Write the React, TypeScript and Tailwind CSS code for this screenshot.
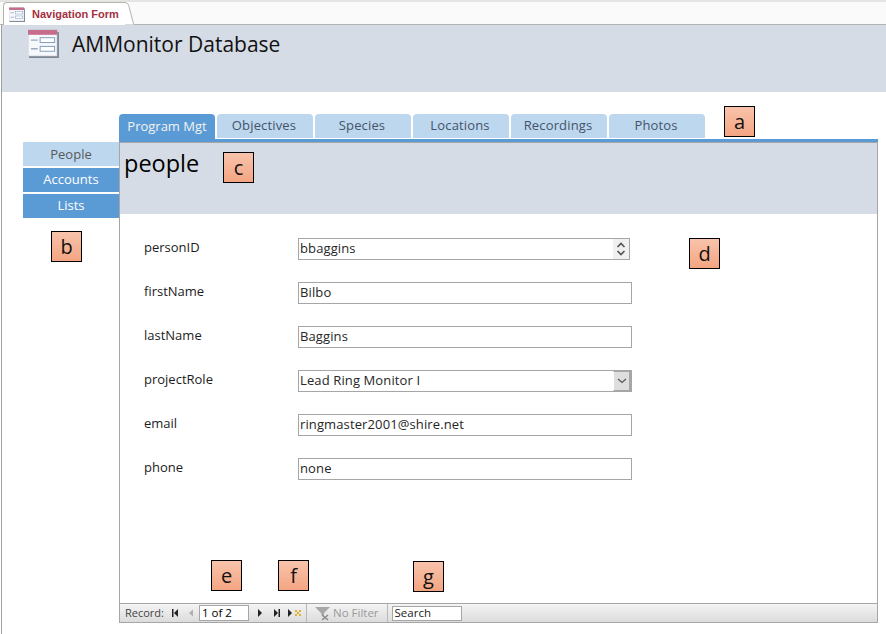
const FONT = "font-['Open_Sans','Noto_Sans',sans-serif]"

const TABS = ["Program Mgt", "Objectives", "Species", "Locations", "Recordings", "Photos"]
const SIDE = ["People", "Accounts", "Lists"]

const NOTES = [
  { text: "a", cls: "left-[724px] top-[106px]" },
  { text: "b", cls: "left-[51px] top-[231px]" },
  { text: "c", cls: "left-[223px] top-[152px]" },
  { text: "d", cls: "left-[689px] top-[238px]" },
  { text: "e", cls: "left-[211px] top-[560px]" },
  { text: "f", cls: "left-[278px] top-[560px]" },
  { text: "g", cls: "left-[413px] top-[561px]" },
]

function FormIcon({ width, height }: { width: number; height: number }) {
  return (
    <svg width={width} height={height} viewBox="0 0 32 30" className="shrink-0">
      <rect x="1" y="3" width="31" height="27" fill="#7d8794" />
      <rect x="0" y="1" width="30" height="27" fill="#f6f8fb" stroke="#a9b4c2" strokeWidth="0.6" />
      <rect x="0" y="1" width="30" height="5" fill="#c66d8c" />
      <path d="M3 11.500h7M3 20.500h7" stroke="#9aa9bb" strokeWidth="1.500" />
      <rect x="12.500" y="9" width="15" height="5" fill="#fff" stroke="#7f9cc0" />
      <rect x="12.500" y="18" width="15" height="5" fill="#fff" stroke="#7f9cc0" />
    </svg>
  )
}

function NavGlyph({ d, color = "#222" }: { d: string; color?: string }) {
  return (
    <svg width="8" height="10" viewBox="0 0 8 10" className="shrink-0">
      <path d={d} fill={color} />
    </svg>
  )
}

function Field({ label, children }: { label: string; children: React.ReactNode }) {
  return (
    <div className="flex h-[22px] items-center">
      <div className="w-[154px] -translate-y-[1px] text-[13px] text-[#1c1c1c]">{label}</div>
      {children}
    </div>
  )
}

function TextBox({ value }: { value: string }) {
  return (
    <div className="flex h-[22px] w-[334px] items-center border border-[#a6a6a6] bg-white pl-[1px] text-[13px] tracking-[0.12px] text-[#262626]">
      {value}
    </div>
  )
}

export default function App() {
  return (
    <div className={`relative flex h-[634px] w-[886px] flex-col overflow-hidden bg-white ${FONT}`}>
      {/* document tab strip */}
      <div className="flex h-[25px] items-end border-t-2 border-b border-t-[#e4e4e4] border-b-[#b4b4b4] bg-[#fafafa] pl-[3px]">
        <div className="relative z-10 -mb-px flex h-[23px] w-[122px] items-center gap-[7px] rounded-tl-[4px] border-t border-l border-[#b4b4a8] bg-white pl-[5px]">
          <FormIcon width={16} height={15} />
          <span className="font-['Liberation_Sans',sans-serif] text-[11px] font-bold whitespace-nowrap text-[#a4303f]">Navigation Form</span>
          <svg width="10" height="23" viewBox="0 0 10 23" className="absolute top-[-1px] left-[120px]">
            <path d="M0 .5c3 0 4 1 5 4L9 20c.3 1.500 1 2.500 1 2.500H0z" fill="#fff" />
            <path d="M0 .5c3 0 4 1 5 4L9 20c.3 1.500 1 2.500 1 2.500" fill="none" stroke="#b4b4a8" />
          </svg>
        </div>
      </div>

      <div className="ml-[1px] flex flex-1 flex-col border-l border-l-[#a0a0a0]">
        <div className="flex h-[67px] items-start gap-[13px] bg-[#d6dce5] pt-[4px] pl-[26px]">
          <FormIcon width={31} height={29} />
          <div className="text-[21px] leading-[30px] text-[#111]">AMMonitor Database</div>
        </div>

        <div className="flex flex-1 pt-[22px] pl-[21px]">
          <div className="flex w-[96px] flex-col gap-[2px] pt-[28px]">
            {SIDE.map((s, i) => (
              <div
                key={s}
                className={
                  i === 0
                    ? "flex h-[24px] items-center justify-center bg-[#bdd7ee] pt-[1px] text-[13px] text-[#595959]"
                    : "flex h-[24px] items-center justify-center bg-[#5b9bd5] text-[13px] text-white"
                }
              >
                {s}
              </div>
            ))}
          </div>

          <div className="flex h-[509px] w-[759px] flex-col">
            <div className="flex h-[28px] gap-[2px] border-b-[3px] border-b-[#5b9bd5]">
              {TABS.map((t, i) => (
                <div
                  key={t}
                  className={
                    i === 0
                      ? "flex h-[25px] w-[96px] items-center justify-center rounded-t-[4px] bg-[#5b9bd5] text-[13px] text-[#f2f2f2]"
                      : "flex h-[24px] w-[96px] items-center justify-center rounded-t-[4px] bg-[#bdd7ee] pr-[2px] text-[13px] tracking-[0.15px] text-[#44546a]"
                  }
                >
                  {t}
                </div>
              ))}
            </div>

            <div className="flex flex-1 flex-col border border-[#a6a6a6]">
              <div className="h-[71px] bg-[#d6dce5] pt-[2px] pl-[4px] text-[23.5px] leading-[36px] text-black">people</div>

              <div className="flex flex-1 flex-col gap-[22px] pt-[24px] pl-[24px]">
                <Field label="personID">
                  <div className="flex h-[22px] w-[332px] items-center justify-between border border-[#a6a6a6] pl-[1px] text-[13px] tracking-[0.12px] text-[#262626]">
                    bbaggins
                    <div className="flex h-full w-[16px] items-center justify-center bg-[#f0f0f0]">
                      <svg width="10" height="16" viewBox="0 0 10 16">
                        <path d="M1.500 6 5 2.500 8.500 6M1.500 10 5 13.500 8.500 10" fill="none" stroke="#555" strokeWidth="1.700" />
                      </svg>
                    </div>
                  </div>
                </Field>
                <Field label="firstName"><TextBox value="Bilbo" /></Field>
                <Field label="lastName"><TextBox value="Baggins" /></Field>
                <Field label="projectRole">
                  <div className="flex h-[22px] w-[334px] items-center justify-between border border-[#a6a6a6] pl-[1px] text-[13px] tracking-[0.12px] text-[#262626]">
                    Lead Ring Monitor I
                    <div className="flex h-full w-[18px] items-center justify-center border-y border-r-2 border-l border-y-[#a6a6a6] border-r-[#a6a6a6] border-l-white bg-[#dedede]">
                      <svg width="10" height="6" viewBox="0 0 10 6">
                        <path d="M1 1l4 3.500L9 1" fill="none" stroke="#555" strokeWidth="1.200" />
                      </svg>
                    </div>
                  </div>
                </Field>
                <Field label="email"><TextBox value="ringmaster2001@shire.net" /></Field>
                <Field label="phone"><TextBox value="none" /></Field>
              </div>

              {/* record navigation */}
              <div className="flex h-[19px] items-center border-t border-[#a6a6a6] bg-gradient-to-b from-[#f4f4f4] to-[#dcdcdc] pl-[5px] text-[11.5px] text-[#444]">
                <span className="w-[46px] text-[11px]">Record:</span>
                <NavGlyph d="M1 1h1.500v8H1zM7 1v8L3 5z" />
                <div className="ml-[8px]"><NavGlyph d="M6 1.500v7L2 5z" color="#b0b0b0" /></div>
                <div className="ml-[4px] flex h-[16px] w-[50px] items-center border border-[#a6a6a6] bg-white pl-[2px] text-black">1 of 2</div>
                <div className="ml-[7px]"><NavGlyph d="M2 1v8l4-4z" /></div>
                <div className="ml-[9px]"><NavGlyph d="M1 1v8l4-4zM5.500 1H7v8H5.500z" /></div>
                <div className="ml-[6px]"><NavGlyph d="M1 1v8l4-4z" /></div>
                <svg width="6" height="6" viewBox="0 0 6 6" className="shrink-0">
                  <path d="M0 0h2v2H0zM4 0h2v2H4zM2 2h2v2H2zM0 4h2v2H0zM4 4h2v2H4z" fill="#e0b030" />
                </svg>
                <div className="ml-[5px] h-full w-px bg-[#b8b8b8]" />
                <svg width="16" height="15" viewBox="0 0 16 15" className="ml-[8px] shrink-0">
                  <path d="M0 1h15L9 7v3L6 8V7z" fill="#a8a8a8" />
                  <path d="M7 9l6 5M13 9l-6 5" stroke="#8a8a8a" strokeWidth="1.500" />
                </svg>
                <span className="ml-[2px] text-[#9a9a9a]">No Filter</span>
                <div className="ml-[8px] h-full w-px bg-[#b8b8b8]" />
                <div className="ml-[4px] flex h-[15px] w-[70px] items-center border border-[#a6a6a6] bg-white pl-[2px] text-[#222]">Search</div>
              </div>
            </div>
          </div>
        </div>
      </div>

      {NOTES.map((n) => (
        <div
          key={n.text}
          className={`absolute flex h-[31px] w-[31px] items-center justify-center border border-black bg-gradient-to-b from-[#f8c3ab] to-[#f4a582] text-[20px] text-[#111] ${n.cls}`}
        >
          {n.text}
        </div>
      ))}
    </div>
  )
}
